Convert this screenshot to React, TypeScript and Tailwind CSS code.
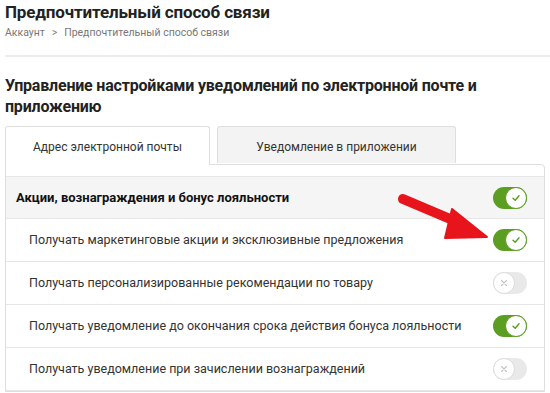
import React from "react";

function Toggle({ on }: { on: boolean }) {
  if (on) {
    return (
      <div className="relative h-[22px] w-[34px] rounded-full bg-[#5c9e21]">
        <div className="absolute right-0 top-0 flex h-[22px] w-[22px] items-center justify-center rounded-full border border-[#5c9e21] bg-white">
          <svg width="10" height="10" viewBox="0 0 10 10" fill="none">
            <path d="M2 5.2 L4.2 7.3 L8 2.8" stroke="#5c9e21" strokeWidth="1.4" strokeLinecap="round" strokeLinejoin="round" />
          </svg>
        </div>
      </div>
    );
  }
  return (
    <div className="relative h-[22px] w-[34px] rounded-full bg-[#e9e9e9]">
      <div className="absolute left-0 top-0 flex h-[22px] w-[22px] items-center justify-center rounded-full border border-[#dcdcdc] bg-white">
        <svg width="8" height="8" viewBox="0 0 8 8" fill="none">
          <path d="M1.5 1.5 L6.5 6.5 M6.5 1.5 L1.5 6.5" stroke="#c4c4c4" strokeWidth="1.1" strokeLinecap="round" />
        </svg>
      </div>
    </div>
  );
}

const rows = [
  { label: "Получать маркетинговые акции и эксклюзивные предложения", on: true },
  { label: "Получать персонализированные рекомендации по товару", on: false },
  { label: "Получать уведомление до окончания срока действия бонуса лояльности", on: true },
  { label: "Получать уведомление при зачислении вознаграждений", on: false },
];

export default function App() {
  return (
    <div className="relative h-[393px] w-[550px] overflow-hidden bg-white font-['Roboto','Liberation_Sans',Arial,sans-serif] text-[#1a1a1a]">
      {/* Header */}
      <div className="px-[5px] pt-[1px]">
        <h1 className="text-[17px] font-bold leading-[22px] tracking-[-0.15px] text-[#222]">Предпочтительный способ связи</h1>
        <div className="mt-[3px] flex items-center gap-[7px] text-[10.5px] leading-[14px] text-[#777]">
          <span>Аккаунт</span>
          <span className="text-[10px]">&gt;</span>
          <span>Предпочтительный способ связи</span>
        </div>
      </div>
      <div className="ml-[5px] mt-[15px] h-[2px] bg-[#ececec]" />

      <h2 className="mt-[18px] px-[5px] text-[16px] font-bold leading-[21px] tracking-[-0.2px] text-[#222]">
        Управление настройками уведомлений по электронной почте и приложению
      </h2>

      {/* Tabs */}
      <div className="mt-[9px] flex h-[38px] items-start gap-[7px] pl-[5px]">
        <div className="relative z-10 flex h-[39px] w-[205px] items-start justify-center rounded-t-[3px] border border-b-0 border-[#dedede] bg-white pt-[11px] text-[12px] text-[#333]">
          Адрес электронной почты
        </div>
        <div className="flex h-[37px] w-[239px] items-start justify-center rounded-t-[3px] border border-b-0 border-[#dedede] bg-[#f3f3f3] pt-[11px] text-[12px] text-[#333]">
          Уведомление в приложении
        </div>
      </div>

      {/* Panel */}
      <div className="ml-[5px] mr-[5px] rounded-tr-[4px] border border-[#dedede] pt-[11px]">
        <div className="flex h-[43px] items-center justify-between border-y border-[#e6e6e6] bg-[#f5f5f5] pl-[10px] pr-[17px]">
          <span className="text-[13px] font-bold text-[#111]">Акции, вознаграждения и бонус лояльности</span>
          <Toggle on />
        </div>
        {rows.map((r) => (
          <div key={r.label} className="flex h-[43px] items-center justify-between border-b border-[#e6e6e6] pl-[23px] pr-[17px]">
            <span className="text-[12.5px] text-[#333]">{r.label}</span>
            <Toggle on={r.on} />
          </div>
        ))}
      </div>

      {/* Red arrow */}
      <svg className="absolute left-[390px] top-[187px]" width="100" height="60" viewBox="0 0 100 60" fill="none">
        <path d="M13 12 L72 37" stroke="#e8141b" strokeWidth="10" strokeLinecap="round" />
        <path d="M62 22 L97 50 L55 51 Z" fill="#e8141b" stroke="#e8141b" strokeWidth="2" strokeLinejoin="round" />
      </svg>
    </div>
  );
}
